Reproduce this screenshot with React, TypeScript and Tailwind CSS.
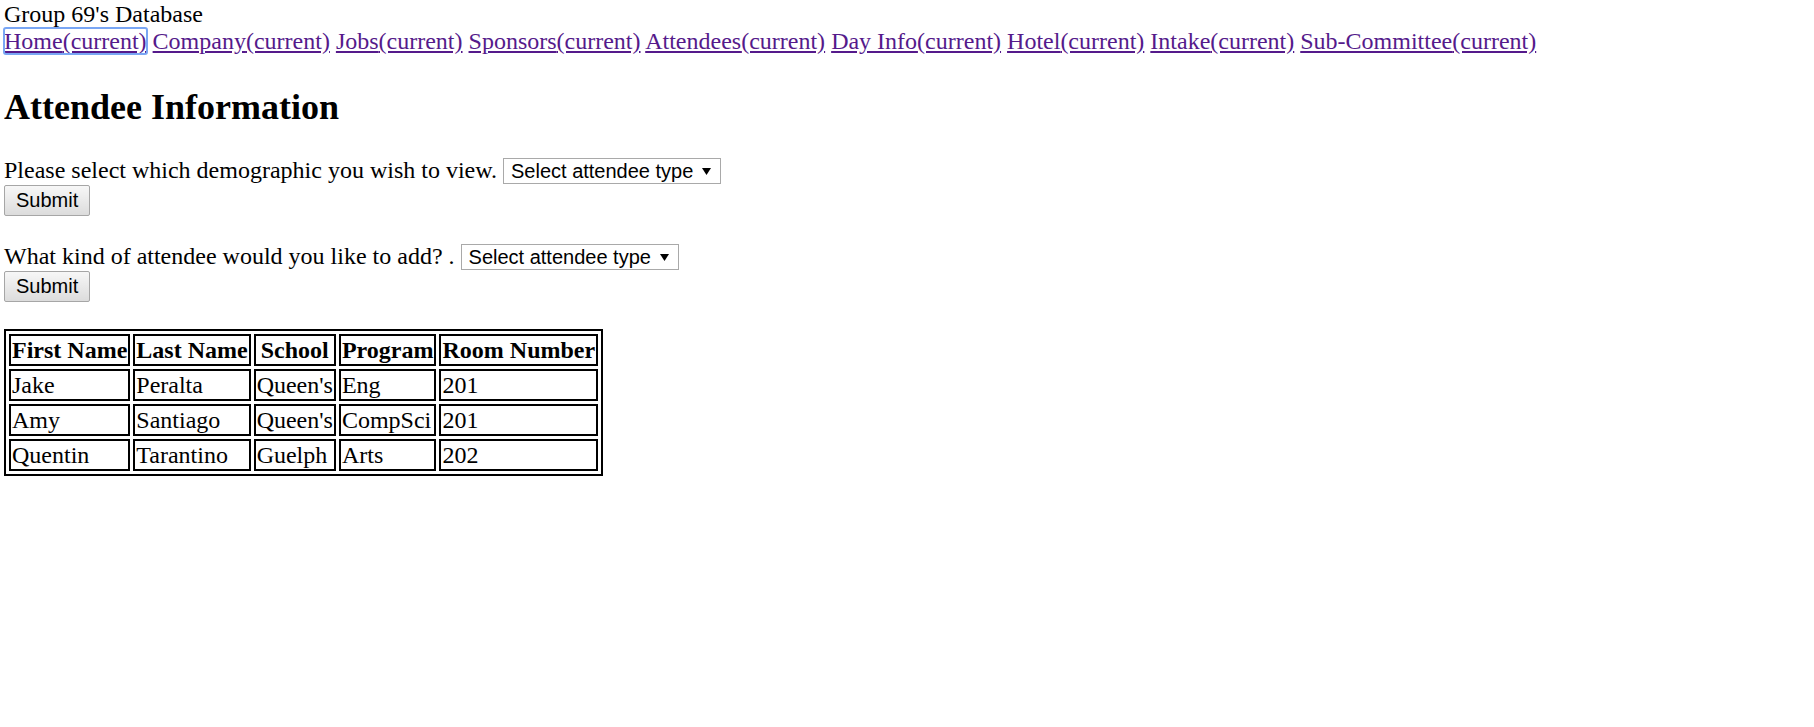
import React from "react";

interface Attendee {
  first: string;
  last: string;
  school: string;
  program: string;
  room: string;
}

const navLinks = [
  "Home",
  "Company",
  "Jobs",
  "Sponsors",
  "Attendees",
  "Day Info",
  "Hotel",
  "Intake",
  "Sub-Committee",
];

const attendees: Attendee[] = [
  { first: "Jake", last: "Peralta", school: "Queen's", program: "Eng", room: "201" },
  { first: "Amy", last: "Santiago", school: "Queen's", program: "CompSci", room: "201" },
  { first: "Quentin", last: "Tarantino", school: "Guelph", program: "Arts", room: "202" },
];

const sans = "font-['Liberation_Sans',Arial,sans-serif]";

const SelectBox = () => (
  <span className="relative inline-flex mb-[1px]">
    <select
      defaultValue=""
      className={`appearance-none h-[26px] w-[218px] border border-[#a9a9a9] bg-white pl-[7px] pr-[26px] text-[20px] leading-[24px] text-black rounded-none outline-none ${sans}`}
    >
      <option value="" disabled>
        Select attendee type
      </option>
      <option value="student">Student</option>
      <option value="professional">Professional</option>
      <option value="sponsor">Sponsor</option>
    </select>
    <svg
      className="pointer-events-none absolute right-[10px] top-[10px]"
      width="9"
      height="7"
      viewBox="0 0 9 7"
    >
      <path d="M0 0H9L4.5 7Z" fill="black" />
    </svg>
  </span>
);

const SubmitButton = () => (
  <button
    type="submit"
    className={`h-[31px] px-[11px] border border-[#a6a6a6] rounded-[2px] bg-linear-to-b from-[#f7f7f7] to-[#dcdcdc] text-[20px] leading-[23px] text-black ${sans}`}
  >
    Submit
  </button>
);

const App = () => {
  return (
    <div className="min-h-screen bg-white text-black pl-[4px] pt-[1px] font-['Liberation_Serif','Times_New_Roman',serif] text-[24px] leading-[normal]">
      <div>Group 69's Database</div>
      <nav>
        {navLinks.map((name, i) => (
          <React.Fragment key={name}>
            <a
              href="#"
              className={
                i === 0
                  ? "text-[#551a8b] underline outline-2 outline-[#79a6f4] outline-offset-[-1px] rounded-[2px]"
                  : "text-[#551a8b] underline"
              }
            >
              {name}
              <span>(current)</span>
            </a>
            {i < navLinks.length - 1 && " "}
          </React.Fragment>
        ))}
      </nav>

      <h2 className="text-[36px] font-bold leading-[normal] mt-[31px] mb-[28.5px]">
        Attendee Information
      </h2>

      <form className="mb-[27.5px]" onSubmit={(e) => e.preventDefault()}>
        Please select which demographic you wish to view. <SelectBox />
        <br />
        <SubmitButton />
      </form>

      <form onSubmit={(e) => e.preventDefault()}>
        What kind of attendee would you like to add? . <SelectBox />
        <br />
        <SubmitButton />
      </form>

      <table className="mt-[27px] border-2 border-black border-separate border-spacing-[3px]">
        <thead>
          <tr>
            {["First Name", "Last Name", "School", "Program", "Room Number"].map((h) => (
              <th
                key={h}
                className="border-2 border-black px-[1px] py-0 leading-[28px] font-bold text-center"
              >
                {h}
              </th>
            ))}
          </tr>
        </thead>
        <tbody>
          {attendees.map((a) => (
            <tr key={a.first}>
              {[a.first, a.last, a.school, a.program, a.room].map((v, j) => (
                <td
                  key={j}
                  className="border-2 border-black px-[1px] py-0 leading-[28px] text-left"
                >
                  {v}
                </td>
              ))}
            </tr>
          ))}
        </tbody>
      </table>
    </div>
  );
};

export default App;
